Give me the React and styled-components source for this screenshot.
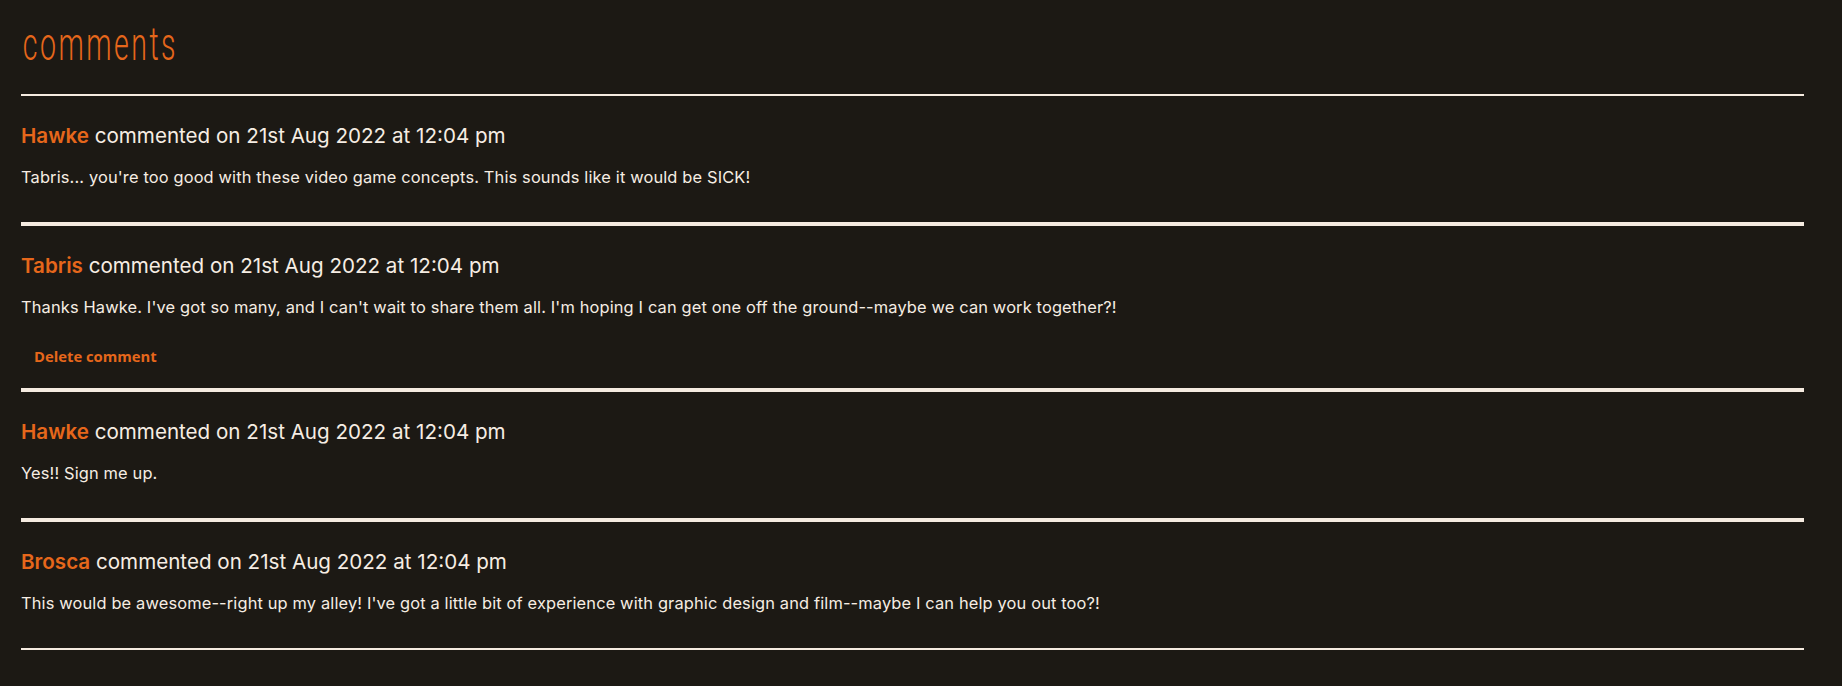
import React from "react";
import styled, { createGlobalStyle } from "styled-components";

const GlobalStyle = createGlobalStyle`
  html, body {
    margin: 0;
    padding: 0;
    background: #1c1914;
  }
  body {
    font-family: Inter, "Noto Sans", sans-serif;
    color: #f6ede3;
  }
`;

const Page = styled.main`
  padding: 21px 38px 40px 21px;
`;

const Heading = styled.h2`
  margin: 0 0 27px;
  height: 46px;
  font-family: Roboto, Inter, sans-serif;
  font-weight: 300;
  font-size: 46px;
  line-height: 46px;
  color: #e6671b;
`;

const HeadingText = styled.span`
  display: inline-block;
  padding-left: 3px;
  letter-spacing: 4px;
  transform: scaleX(0.62);
  transform-origin: left center;
`;

const List = styled.section`
  display: flex;
  flex-direction: column;
`;

const Comment = styled.article`
  display: flex;
  flex-direction: column;
  align-items: flex-start;
  padding: 24px 0 16px;
  border-top: 2px solid #f5ebe0;
  border-bottom: 2px solid #f5ebe0;
`;

const Meta = styled.h3`
  margin: 0 0 13px;
  font-family: Inter, sans-serif;
  font-size: 20.6px;
  font-weight: 400;
  line-height: 32px;
  color: #f6ede3;
`;

const Author = styled.span`
  color: #e6671b;
  font-weight: 600;
`;

const Body = styled.p`
  margin: 0 0 17px;
  font-family: Inter, sans-serif;
  font-size: 16.4px;
  letter-spacing: 0.15px;
  line-height: 24px;
  color: #f6ede3;
`;

const DeleteButton = styled.button`
  margin: 4px 0 0;
  padding: 6px 13px;
  border: none;
  background: transparent;
  font-family: "Open Sans", sans-serif;
  font-weight: 700;
  font-size: 14.8px;
  line-height: 20px;
  color: #e6671b;
  cursor: pointer;
`;

const comments = [
  {
    author: "Hawke",
    date: "21st Aug 2022 at 12:04 pm",
    text: "Tabris... you're too good with these video game concepts. This sounds like it would be SICK!",
  },
  {
    author: "Tabris",
    date: "21st Aug 2022 at 12:04 pm",
    text: "Thanks Hawke. I've got so many, and I can't wait to share them all. I'm hoping I can get one off the ground--maybe we can work together?!",
    own: true,
  },
  {
    author: "Hawke",
    date: "21st Aug 2022 at 12:04 pm",
    text: "Yes!! Sign me up.",
  },
  {
    author: "Brosca",
    date: "21st Aug 2022 at 12:04 pm",
    text: "This would be awesome--right up my alley! I've got a little bit of experience with graphic design and film--maybe I can help you out too?!",
  },
];

export default function App() {
  return (
    <>
      <GlobalStyle />
      <Page>
        <Heading>
          <HeadingText>comments</HeadingText>
        </Heading>
        <List>
          {comments.map((c, i) => (
            <Comment key={i}>
              <Meta>
                <Author>{c.author}</Author> commented on {c.date}
              </Meta>
              <Body>{c.text}</Body>
              {c.own && <DeleteButton>Delete comment</DeleteButton>}
            </Comment>
          ))}
        </List>
      </Page>
    </>
  );
}
